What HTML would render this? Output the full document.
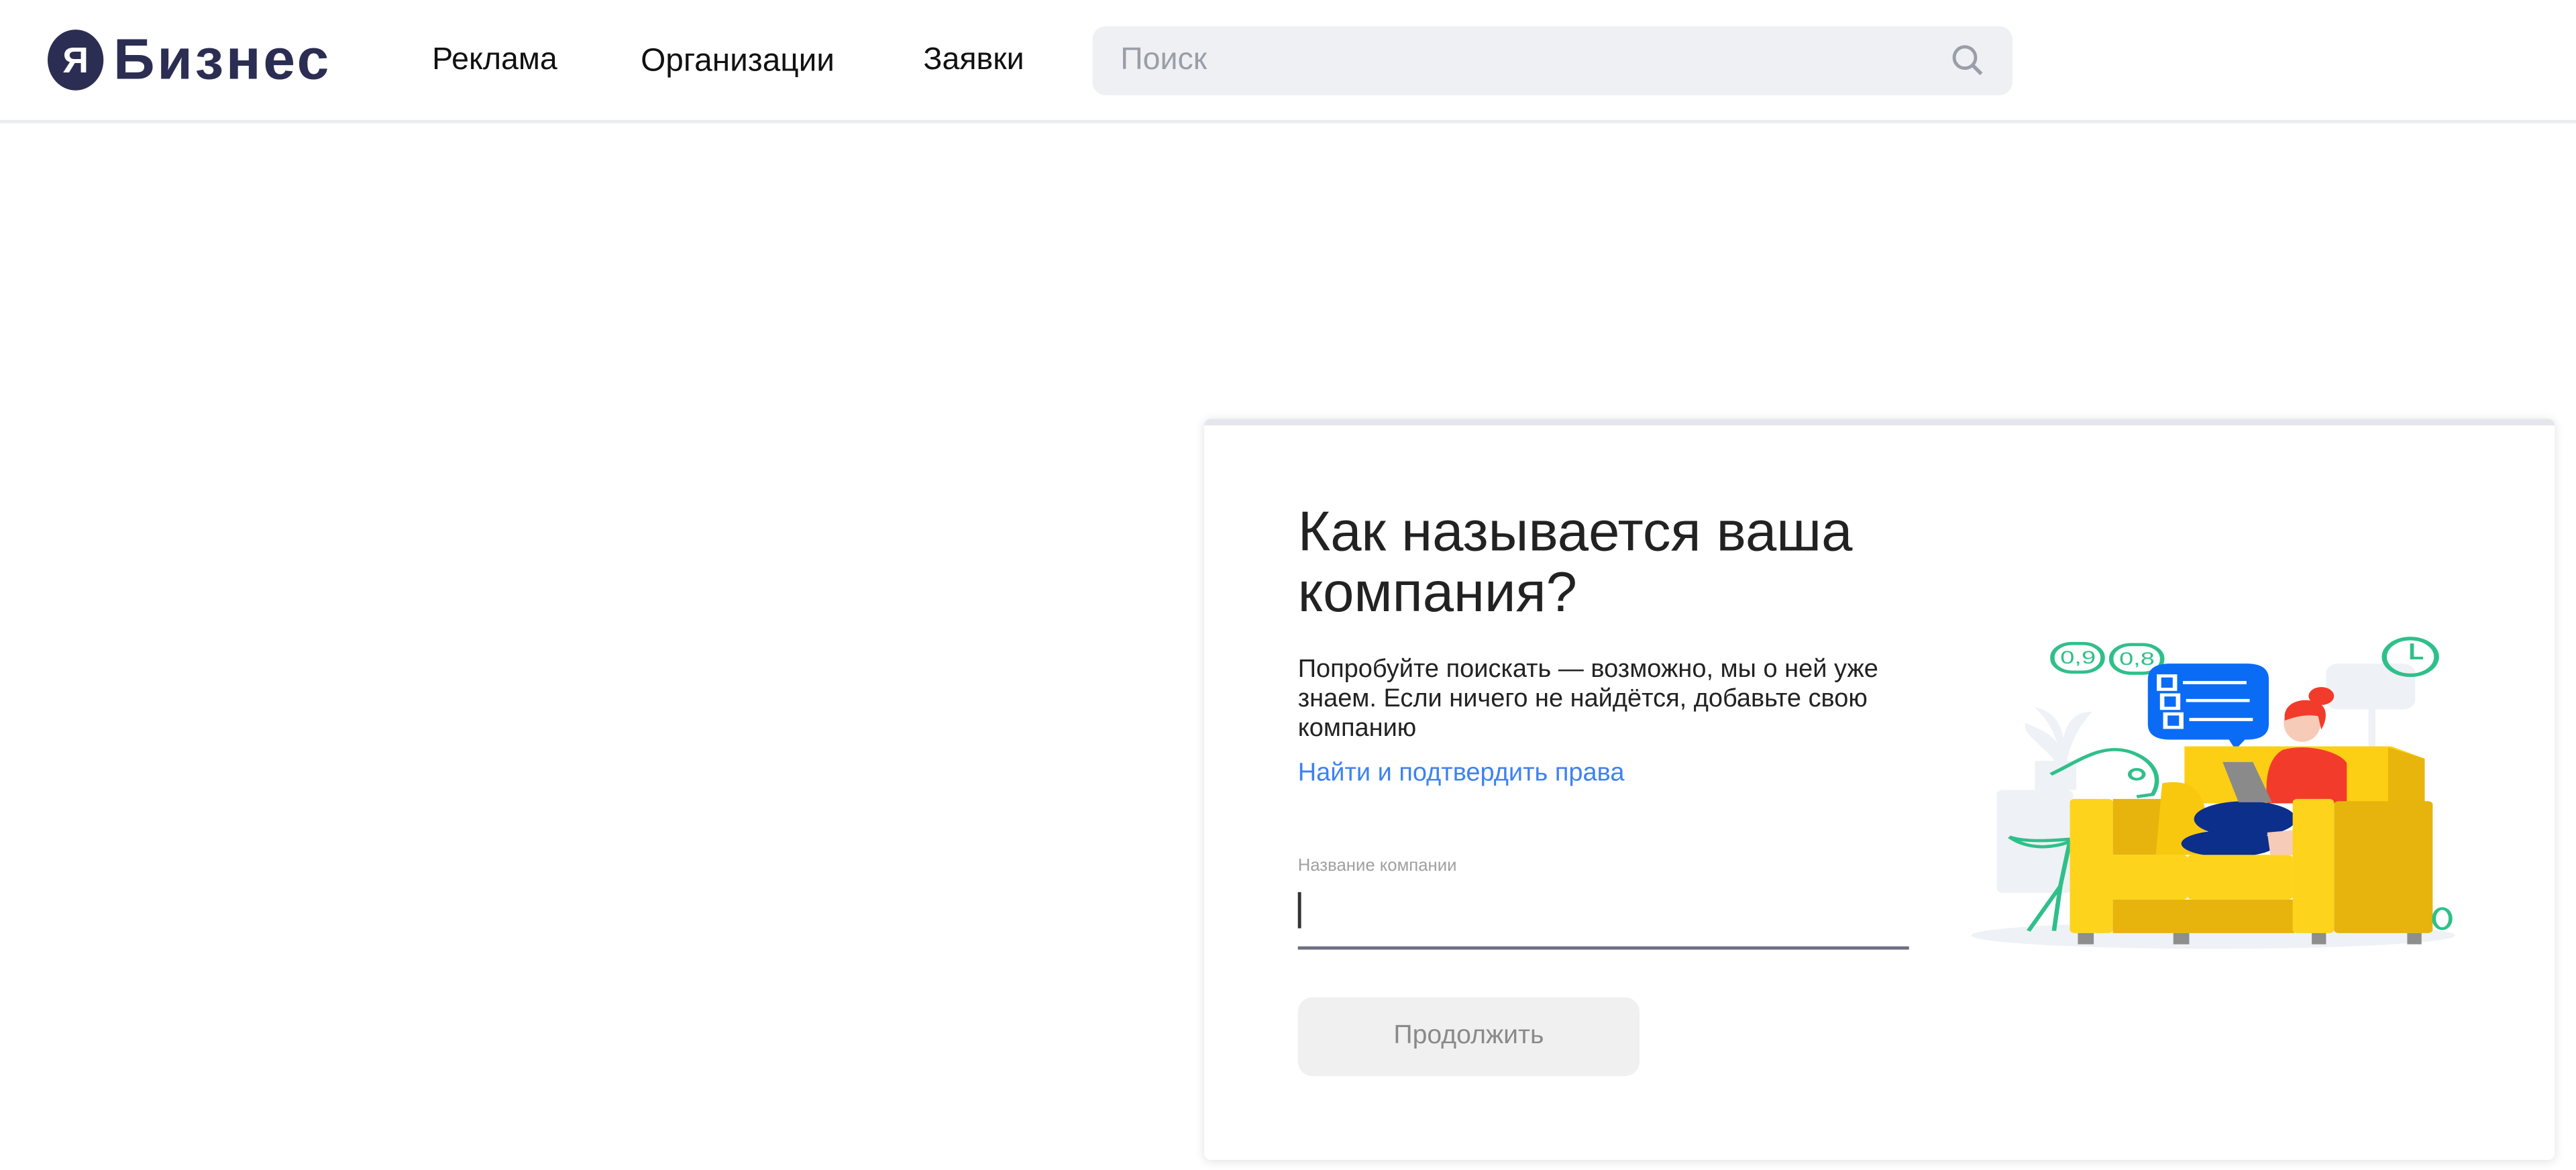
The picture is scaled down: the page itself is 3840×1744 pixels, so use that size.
<!DOCTYPE html>
<html><head><meta charset="utf-8"><style>
html,body{margin:0;padding:0;background:#fff;}
body{width:3840px;height:1744px;overflow:hidden;position:relative;font-family:"Liberation Sans","Noto Sans CJK JP",sans-serif;}
#w{position:absolute;left:0;top:0;width:1568px;height:712px;transform:scale(2.449);transform-origin:0 0;}
.a{position:absolute;white-space:nowrap;}
</style></head><body><div id="w">
<div class="a" style="left:0;top:73px;width:1568px;height:2px;background:#ebecef"></div>
<div class="a" style="left:29px;top:18px;width:34px;height:37px;border-radius:50%;background:#2b2d52;color:#fff;font-weight:bold;font-size:22px;text-align:center;line-height:37px">Я</div>
<div class="a" style="left:69px;top:17px;font-weight:bold;font-size:35px;line-height:40px;color:#2b2d52;letter-spacing:1.5px">Бизнес</div>
<div class="a" style="left:263px;top:25px;font-size:19px;line-height:24px;color:#111">Реклама</div>
<div class="a" style="left:390px;top:25px;font-size:19.5px;line-height:24px;color:#111">Организации</div>
<div class="a" style="left:562px;top:25px;font-size:19px;line-height:24px;color:#111">Заявки</div>
<div class="a" style="left:665px;top:16px;width:560px;height:42px;border-radius:8px;background:#eff0f3"></div>
<div class="a" style="left:682px;top:25px;font-size:19px;line-height:24px;color:#9a9ea8">Поиск</div>
<svg class="a" style="left:1186px;top:25px" width="24" height="24" viewBox="0 0 24 24"><circle cx="10" cy="10" r="6.5" fill="none" stroke="#9a9ea8" stroke-width="2"/><path d="M15 15l5 5" stroke="#9a9ea8" stroke-width="2.2"/></svg>

<div class="a" style="left:733px;top:255px;width:822px;height:447px;background:#fff;border-top:4px solid #e4e6ec;border-radius:4px;box-shadow:0 1px 6px rgba(0,0,0,0.12)"></div>
<div class="a" style="left:790px;top:306px;font-size:34px;line-height:37px;color:#222">Как называется ваша<br>компания?</div>
<div class="a" style="left:790px;top:399px;font-size:15.5px;line-height:18px;color:#222">Попробуйте поискать — возможно, мы о ней уже<br>знаем. Если ничего не найдётся, добавьте свою<br>компанию</div>
<div class="a" style="left:790px;top:462px;font-size:15.5px;line-height:18px;color:#3d82f0">Найти и подтвердить права</div>
<div class="a" style="left:790px;top:521px;font-size:10.5px;line-height:12px;color:#a0a0a0">Название компании</div>
<div class="a" style="left:790px;top:543px;width:1.5px;height:22px;background:#333"></div>
<div class="a" style="left:790px;top:576px;width:372px;height:1.5px;background:#6d6f80"></div>
<div class="a" style="left:790px;top:607px;width:208px;height:48px;border-radius:9px;background:#f0f0f0;color:#8a8a8a;font-size:16px;line-height:48px;text-align:center">Продолжить</div>

<svg class="a" style="left:1196.4px;top:375.7px" width="302.2" height="204.2" viewBox="0 0 1560 1500" preserveAspectRatio="none">
<ellipse cx="780" cy="1420" rx="760" ry="60" fill="#eef1f5"/>
<rect x="100" y="770" width="240" height="460" rx="20" fill="#eef1f5"/>
<rect x="220" y="640" width="130" height="130" fill="#eef1f5"/>
<path d="M290 650 C230 550 180 520 190 470 C240 500 270 520 290 560 C270 470 240 430 220 400 C280 420 300 470 310 540 C320 460 350 420 400 420 C370 470 340 520 320 640Z" fill="#eef1f5"/>
<rect x="1135" y="205" width="280" height="205" rx="40" fill="#eef1f5"/>
<rect x="1268" y="410" width="22" height="170" fill="#eef1f5"/>
<circle cx="1400" cy="175" r="82" fill="none" stroke="#2fc08a" stroke-width="16"/>
<path d="M1405 115 V180 H1440" fill="none" stroke="#2fc08a" stroke-width="12"/>
<rect x="275" y="115" width="158" height="128" rx="62" fill="#fff" stroke="#2fc08a" stroke-width="14"/>
<rect x="460" y="120" width="160" height="128" rx="62" fill="#fff" stroke="#2fc08a" stroke-width="14"/>
<text x="300" y="205" font-size="80" fill="#2fc08a" font-family="Liberation Sans">0,9</text>
<text x="485" y="210" font-size="80" fill="#2fc08a" font-family="Liberation Sans">0,8</text>
<path d="M270 700 C360 640 430 560 520 600 C600 640 620 720 590 790 L540 800 M330 990 C250 1000 180 1000 140 980 C200 1040 280 1030 330 1000 L300 1200 L200 1400 M300 1200 L280 1400" fill="none" stroke="#2fc08a" stroke-width="14"/>
<circle cx="540" cy="700" r="22" fill="none" stroke="#2fc08a" stroke-width="12"/>
<path d="M575 205 H885 Q955 205 955 275 V475 Q955 545 885 545 H880 L850 590 L830 545 H645 Q575 545 575 475 V275 Q575 205 645 205Z" fill="#0a6cf5"/>
<g stroke="#fff" stroke-width="14" fill="none"><path d="M685 290 H885 M695 370 H895 M705 455 H905"/><rect x="610" y="260" width="50" height="60"/><rect x="620" y="345" width="50" height="60"/><rect x="630" y="430" width="50" height="60"/></g>
<path d="M690 575 H1340 L1445 630 V830 H690Z" fill="#fccf14"/>
<path d="M1330 580 L1445 630 V830 H1330Z" fill="#e8b50c"/>
<path d="M465 810 H700 V1060 H465Z" fill="#e6b40c"/>
<path d="M620 740 C700 720 750 760 760 900 L760 1060 H600Z" fill="#f8c80f"/>
<path d="M1000 590 C1080 560 1180 600 1200 650 L1200 830 L950 830 C940 700 960 620 1000 590Z" fill="#f33b2b"/>
<ellipse cx="1060" cy="470" rx="58" ry="85" fill="#f6cbb8"/>
<path d="M1005 450 C1000 380 1060 350 1110 380 C1140 400 1140 450 1120 500 L1110 440 C1080 430 1040 440 1005 460Z" fill="#f33b2b"/>
<circle cx="1120" cy="350" r="40" fill="#f33b2b"/>
<ellipse cx="880" cy="900" rx="160" ry="80" fill="#0b2f8a"/>
<ellipse cx="830" cy="1010" rx="150" ry="60" fill="#0b2f8a"/>
<path d="M950 960 L1030 950 L1030 1060 L960 1060Z" fill="#f6cbb8"/>
<path d="M810 645 H905 L965 825 H860Z" fill="#8a8a8a"/>
<rect x="330" y="810" width="135" height="600" rx="15" fill="#fdd31c"/>
<rect x="430" y="1060" width="270" height="200" rx="15" fill="#fdd31c"/>
<rect x="700" y="1060" width="330" height="200" rx="15" fill="#fdd31c"/>
<rect x="465" y="1260" width="570" height="150" fill="#e6b40c"/>
<rect x="1160" y="820" width="310" height="590" rx="15" fill="#e6b40c"/>
<rect x="1030" y="810" width="130" height="600" rx="15" fill="#fdd31c"/>
<g fill="#8e8e8e"><rect x="355" y="1410" width="50" height="50"/><rect x="655" y="1410" width="50" height="50"/><rect x="1090" y="1410" width="45" height="50"/><rect x="1390" y="1410" width="45" height="50"/></g>
<ellipse cx="1500" cy="1345" rx="26" ry="45" fill="#fff" stroke="#2fc08a" stroke-width="12"/>
</svg>
</div></body></html>
